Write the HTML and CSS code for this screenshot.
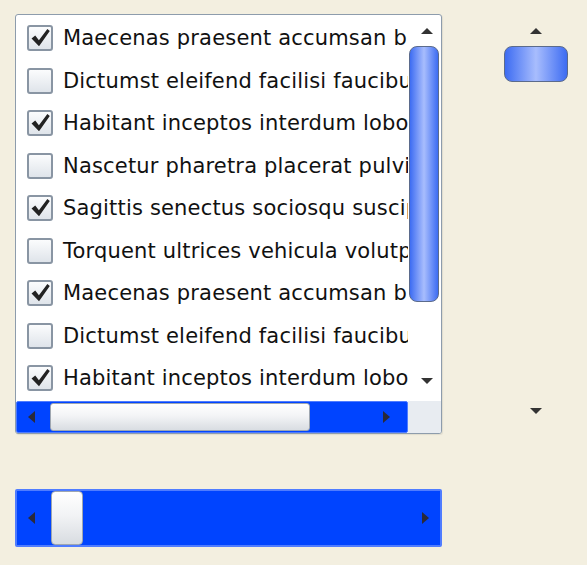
FILE: index.html
```html
<!DOCTYPE html>
<html>
<head>
    <title>Check List</title>
    <link rel="stylesheet" href="styles.css">
</head>
<body>
    <div class="page">
        <div class="left-column">
            <div class="list-box">
                <ul class="check-list">
                    <li class="item"><span class="box checked"></span><span class="label">Maecenas praesent accumsan bibendum</span></li>
                    <li class="item"><span class="box"></span><span class="label">Dictumst eleifend facilisi faucibus</span></li>
                    <li class="item"><span class="box checked"></span><span class="label">Habitant inceptos interdum lobortis</span></li>
                    <li class="item"><span class="box"></span><span class="label">Nascetur pharetra placerat pulvinar</span></li>
                    <li class="item"><span class="box checked"></span><span class="label">Sagittis senectus sociosqu suscipit</span></li>
                    <li class="item"><span class="box"></span><span class="label">Torquent ultrices vehicula volutpat</span></li>
                    <li class="item"><span class="box checked"></span><span class="label">Maecenas praesent accumsan bibendum</span></li>
                    <li class="item"><span class="box"></span><span class="label">Dictumst eleifend facilisi faucibus</span></li>
                    <li class="item"><span class="box checked"></span><span class="label">Habitant inceptos interdum lobortis</span></li>
                </ul>

                <div class="v-scroll">
                    <span class="arrow up"></span>
                    <div class="v-thumb"></div>
                    <span class="arrow down"></span>
                </div>

                <div class="h-scroll">
                    <span class="arrow left"></span>
                    <div class="h-thumb"></div>
                    <span class="arrow right"></span>
                </div>
                <div class="corner"></div>
            </div>

            <div class="slider">
                <span class="arrow left"></span>
                <div class="slider-thumb"></div>
                <span class="arrow right"></span>
            </div>
        </div>

        <div class="side-scroll">
            <span class="arrow up"></span>
            <div class="side-thumb"></div>
            <span class="arrow down"></span>
        </div>
    </div>
</body>
</html>
```

FILE: styles.css
```css
body {
    margin: 0;
    padding: 0;
    background-color: #f3efe0;
    font-family: 'DejaVu Sans', Verdana, sans-serif;
    color: #111;
}

.page {
    display: flex;
    padding: 14px 0 0 15px;
}

.left-column {
    display: flex;
    flex-direction: column;
    width: 427px;
}

/* list box with its own scroll bars */
.list-box {
    display: grid;
    grid-template-columns: 1fr 33px;
    grid-template-rows: 386px 32px;
    height: 420px;
    box-sizing: border-box;
    border: 1px solid #8d9cac;
    border-radius: 3px;
    background-color: #fff;
    overflow: hidden;
    box-shadow: 1px 1px 1px rgba(0, 0, 0, 0.08);
}

.check-list {
    list-style: none;
    margin: 0;
    padding: 2px 0 0 0;
    overflow: hidden;
}

.item {
    display: flex;
    align-items: center;
    height: 42.5px;
    white-space: nowrap;
}

.box {
    flex: none;
    width: 22px;
    height: 22px;
    margin: 0 10px 0 11px;
    border: 2px solid #8995a3;
    border-radius: 3px;
    background: linear-gradient(#fbfcfd, #dfe4ea);
    position: relative;
}

.box.checked::after {
    content: "";
    position: absolute;
    left: 2px;
    top: 1px;
    width: 19px;
    height: 19px;
    background: url("data:image/svg+xml;utf8,<svg xmlns='http://www.w3.org/2000/svg' viewBox='0 0 18 18'><path d='M0.5 10 L4 7 L7.5 11.5 L15.5 1 L17.8 2.8 L7.6 17.2 Z' fill='%23222'/></svg>") no-repeat;
}

.label {
    font-size: 21px;
    line-height: 24px;
    letter-spacing: 0.18px;
}

.arrow {
    width: 0;
    height: 0;
    border-style: solid;
    flex: none;
}

.arrow.up {
    border-width: 0 6px 6px 6px;
    border-color: transparent transparent #333 transparent;
}

.arrow.down {
    border-width: 6px 6px 0 6px;
    border-color: #333 transparent transparent transparent;
}

.arrow.left {
    border-width: 6px 7px 6px 0;
    border-color: transparent #2a2a3a transparent transparent;
}

.arrow.right {
    border-width: 6px 0 6px 7px;
    border-color: transparent transparent transparent #2a2a3a;
}

.v-scroll {
    display: flex;
    flex-direction: column;
    align-items: center;
    padding: 13px 0 0 0;
}

.v-scroll .arrow.up {
    margin-left: 4px;
}

.v-scroll .arrow.down {
    margin-top: 76px;
    margin-left: 4px;
}

.v-thumb {
    width: 30px;
    height: 256px;
    margin-top: 12px;
    margin-left: -1px;
    box-sizing: border-box;
    border: 1px solid #5b6b8c;
    border-radius: 8px;
    background: linear-gradient(to right, #3d6cf2, #a8bdfd 50%, #3d6cf2);
}

.h-scroll {
    display: flex;
    align-items: center;
    background-color: #0044ff;
    border: 1px solid #4f7cff;
    border-radius: 2px;
    padding: 0 11px 0 11px;
}

.h-thumb {
    width: 260px;
    height: 28px;
    margin-left: 15px;
    margin-right: 73px;
    box-sizing: border-box;
    border: 1px solid #9ea6b0;
    border-radius: 3px;
    background: linear-gradient(#ffffff, #f3f4f6 45%, #d9dde2);
}

.corner {
    background-color: #e8ecf1;
}

/* standalone horizontal slider */
.slider {
    display: flex;
    align-items: center;
    margin-top: 55px;
    height: 58px;
    box-sizing: border-box;
    background-color: #0044ff;
    border: 2px solid #4f7cff;
    border-radius: 2px;
    padding: 0 11px 0 11px;
}

.slider-thumb {
    width: 32px;
    height: 54px;
    margin-left: 16px;
    margin-right: auto;
    box-sizing: border-box;
    border: 1px solid #9ea6b0;
    border-radius: 4px;
    background: linear-gradient(#ffffff, #f2f3f5 45%, #d8dce1);
}

/* standalone vertical scroll bar */
.side-scroll {
    display: flex;
    flex-direction: column;
    align-items: center;
    width: 64px;
    margin-left: 62px;
    padding-top: 14px;
}

.side-thumb {
    width: 64px;
    height: 36px;
    margin-top: 12px;
    box-sizing: border-box;
    border: 1px solid #5b6b8c;
    border-radius: 8px;
    background: linear-gradient(to right, #3d6cf2, #a8bdfd 50%, #3d6cf2);
}

.side-scroll .arrow.down {
    margin-top: 326px;
}
```
